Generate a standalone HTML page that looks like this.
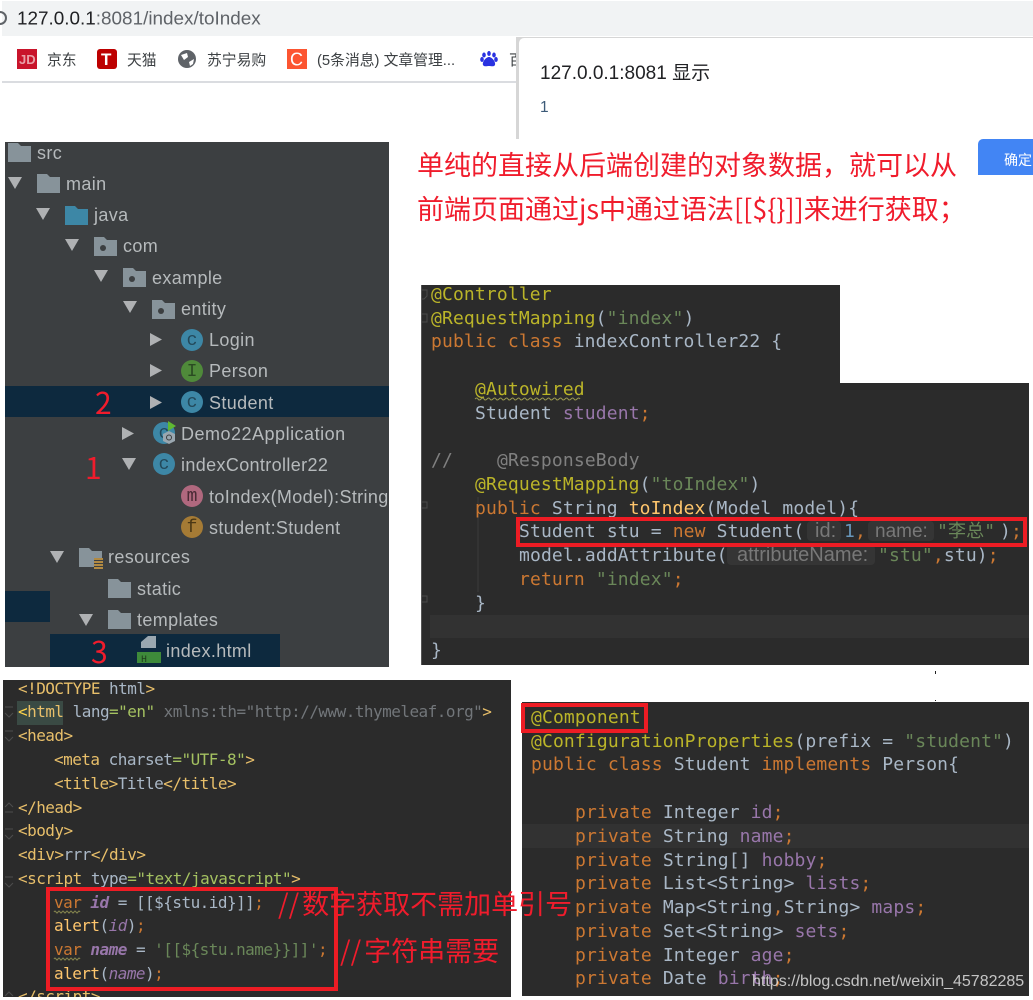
<!DOCTYPE html>
<html lang="zh"><head><meta charset="utf-8"><title>toIndex</title>
<style>
html,body{margin:0;padding:0;background:#fff;width:1033px;height:1000px;overflow:hidden}
svg{display:block}
text{white-space:pre}
.s{font-family:"Liberation Sans","Noto Sans CJK SC",sans-serif}
.t{font-family:"Liberation Sans",sans-serif;font-size:18px;fill:#b6babc;letter-spacing:.36px}
.b{font-family:"Liberation Sans","Noto Sans CJK SC",sans-serif;font-size:14.8px;fill:#3c4043}
.r{font-family:"Noto Sans CJK SC",sans-serif;font-size:27px;fill:#f01c2c}
.c{font-family:"DejaVu Sans Mono","Noto Sans CJK SC",monospace;font-size:18px;letter-spacing:.14px;fill:#a9b7c6}
.h{font-family:"DejaVu Sans Mono",monospace;font-size:16px;letter-spacing:-.53px;fill:#a9b7c6}
.a{fill:#bbb529}.g{fill:#6a8759}.k{fill:#cc7832}.p{fill:#9876aa}.m{fill:#ffc66d}.y{fill:#808080}.e{fill:#e8bf6a}.n{fill:#6897bb}.v{fill:#a5c261}
.i{font-style:italic;fill:#9876aa}
.hint{font-family:"Liberation Sans",sans-serif;font-size:19px;fill:#787878}
.ic{font-family:"Liberation Mono",monospace;font-size:18px;text-anchor:middle}
</style></head><body>
<svg width="1033" height="1000" viewBox="0 0 1033 1000" xmlns="http://www.w3.org/2000/svg">
<defs>
<path id="f" d="M0 0h10l3 3h10v16H0z" fill="#87939a"/>
<g id="pk"><path d="M0 0h10l3 3h10v16H0z" fill="#87939a"/><circle cx="9" cy="11" r="3" fill="#3c3f41"/></g>
<path id="ad" d="M0 0h14l-7 12z" fill="#afb1b3"/>
<path id="ar" d="M0 0l12 6.500-12 6.500z" fill="#afb1b3"/>
<clipPath id="cl"><rect x="3" y="680" width="508" height="317"/></clipPath>
</defs>

<!-- browser chrome -->
<rect x="2" y="1" width="1031" height="35" fill="#f1f3f4"/>
<path d="M0 12a6 6 0 0 1 0 12" fill="none" stroke="#5f6368" stroke-width="2"/>
<text class="s" x="17" y="24.500" font-size="18.900" fill="#5f6368"><tspan fill="#202124">127.0.0.1</tspan>:8081/index/toIndex</text>
<rect x="17" y="49" width="20" height="20" fill="#c9142b"/>
<text class="s" x="19" y="64" font-size="13" font-weight="bold" fill="#e9a0a8">JD</text>
<text class="b" x="47" y="65">京东</text>
<rect x="97" y="49" width="20" height="20" rx="3" fill="#bd0000"/>
<text class="s" x="101" y="65" font-size="17" font-weight="bold" fill="#fff">T</text>
<text class="b" x="127" y="65">天猫</text>
<circle cx="187" cy="59" r="9" fill="#5f6368"/>
<path d="M181 55l6-2 1 4-4 3zM189 62l5-3-1 5-3 2z" fill="#fff"/>
<text class="b" x="207" y="65">苏宁易购</text>
<rect x="287" y="49" width="20" height="20" fill="#fc5531"/>
<text class="s" x="290" y="65.500" font-size="18" fill="#fff">C</text>
<text class="b" x="317" y="65">(5条消息) 文章管理...</text>
<g fill="#2932e1"><ellipse cx="484" cy="55" rx="1.800" ry="2.500"/><ellipse cx="489" cy="53.500" rx="1.800" ry="2.500"/><ellipse cx="494" cy="55" rx="1.800" ry="2.500"/><ellipse cx="482" cy="59.500" rx="1.800" ry="2.500"/><ellipse cx="496" cy="59.500" rx="1.800" ry="2.500"/><path d="M489 57c3 0 7 5 6 8-1 2-4 1-6 1s-5 1-6-1c-1-3 3-8 6-8z"/></g>
<text class="b" x="509" y="65">百</text>
<rect x="2" y="81" width="517" height="2" fill="#dadce0"/>

<!-- alert dialog -->
<rect x="516" y="37" width="517" height="102" fill="#d6d6d6"/>
<path d="M519 139V43a5 5 0 0 1 5-5H1033V139z" fill="#fff"/>
<text class="s" x="540" y="79" font-size="19" fill="#202124">127.0.0.1:8081 显示</text>
<text class="s" x="540" y="112" font-size="15.500" fill="#3c5a78">1</text>
<path d="M978 175V144a5 5 0 0 1 5-5H1033V175z" fill="#4285f4"/>
<text class="s" x="1004" y="165" font-size="14" fill="#fff">确定</text>

<!-- red heading -->
<text class="r" x="417" y="175">单纯的直接从后端创建的对象数据&#xFF0C;就可以从</text>
<text class="r" x="417" y="219">前端页面通过js中通过语法[[${}]]来进行获取&#xFF1B;</text>

<!-- project tree -->
<rect x="5" y="142" width="384" height="525" fill="#3c3f41"/>
<rect x="5" y="386" width="384" height="31" fill="#0d293e"/>
<rect x="5" y="591" width="45" height="31" fill="#0d293e"/>
<rect x="50" y="634" width="230" height="33" fill="#0d293e"/>

<use href="#f" x="8" y="143"/><text class="t" x="37" y="159">src</text>
<use href="#ad" x="8" y="177"/><use href="#f" x="37" y="174"/><text class="t" x="66" y="190">main</text>
<use href="#ad" x="36" y="208"/><path d="M65 206h10l3 3h10v16H65z" fill="#3d87a6"/><text class="t" x="94" y="221">java</text>
<use href="#ad" x="65" y="239"/><use href="#pk" x="94" y="237"/><text class="t" x="123" y="252">com</text>
<use href="#ad" x="94" y="270"/><use href="#pk" x="123" y="268"/><text class="t" x="152" y="284">example</text>
<use href="#ad" x="123" y="301"/><use href="#pk" x="152" y="300"/><text class="t" x="181" y="315">entity</text>

<use href="#ar" x="150" y="333"/><circle cx="192" cy="340" r="11" fill="#3d87a6"/><text class="ic" x="192" y="345" fill="#23495a">c</text><text class="t" x="209" y="346">Login</text>
<use href="#ar" x="150" y="364"/><circle cx="192" cy="371" r="11" fill="#4f8a3a"/><text class="ic" x="192" y="376" fill="#2a4a22" font-size="15">I</text><text class="t" x="209" y="377">Person</text>
<use href="#ar" x="150" y="396"/><circle cx="192" cy="402" r="11" fill="#3d87a6"/><text class="ic" x="192" y="407" fill="#23495a">c</text><text class="t" x="209" y="409">Student</text>
<use href="#ar" x="122" y="427"/><circle cx="164" cy="433" r="11" fill="#3d87a6"/><text class="ic" x="164" y="438" fill="#23495a">c</text><path d="M168 421l8 5-8 5z" fill="#5fb832"/><path d="M169 431l6 3v7l-6 3-6-3v-7z" fill="#9aa7b0"/><circle cx="169" cy="437.500" r="2.500" fill="none" stroke="#3c3f41"/><text class="t" x="181" y="440" style="letter-spacing:.5px">Demo22Application</text>
<use href="#ad" x="122" y="458"/><circle cx="164" cy="464" r="11" fill="#3d87a6"/><text class="ic" x="164" y="469" fill="#23495a">c</text><text class="t" x="181" y="471">indexController22</text>
<circle cx="192" cy="496" r="11" fill="#b0687e"/><text class="ic" x="192" y="501" fill="#4a2a35">m</text><text class="t" x="209" y="503">toIndex(Model):String</text>
<circle cx="192" cy="527" r="11" fill="#a57b35"/><text class="ic" x="192" y="532" fill="#4a3715">f</text><text class="t" x="209" y="534">student:Student</text>
<use href="#ad" x="50" y="551"/><use href="#f" x="79" y="548"/><rect x="94" y="558" width="10" height="12" fill="#3c3f41"/><path d="M94 559h9M94 562h9M94 565h9M94 568h9" stroke="#d9a343" stroke-width="1.500"/><text class="t" x="108" y="563">resources</text>
<use href="#f" x="108" y="579"/><text class="t" x="137" y="595">static</text>
<use href="#ad" x="79" y="614"/><use href="#f" x="108" y="610"/><text class="t" x="137" y="626">templates</text>
<path d="M141 648v-6l7-6h8v12z" fill="#9aa7b0"/><rect x="137" y="652" width="24" height="11" fill="#3e8a3a"/><text class="ic" x="144" y="662" style="font-size:10px" fill="#1f3a1c">H</text><text class="t" x="166" y="657">index.html</text>

<g font-family="'Noto Sans CJK SC',sans-serif" font-size="30" fill="#f01c2c">
<text x="95" y="414">2</text><text x="85" y="479">1</text><text x="91" y="663">3</text>
</g>

<!-- controller code -->
<path d="M421 285H840V383H1029V665H421z" fill="#2b2b2b"/>
<rect x="421" y="285" width="1" height="380" fill="#555"/>
<rect x="430" y="615" width="599" height="23" fill="#323232"/>
<path d="M478 497V592" stroke="#3b3b3b"/>
<g fill="none" stroke="#4a4a4a"><path d="M422 290h5v6l-3 3h-2M422 314h5v8h-5M422 502h5v6h-5M422 596h5v6h-5"/></g>
<text class="c a" x="431" y="300">@Controller</text>
<text class="c" x="431" y="324"><tspan class="a">@RequestMapping</tspan>(<tspan class="g">"index"</tspan>)</text>
<text class="c" x="431" y="347"><tspan class="k">public class </tspan>indexController22 {</text>
<text class="c a" x="475" y="395">@Autowired</text>
<path d="M475 399q2-2 3 0t3 0 3 0 3 0 3 0 3 0 3 0 3 0 3 0 3 0 3 0 3 0 3 0 3 0 3 0 3 0 3 0 3 0 3 0 3 0 3 0 3 0 3 0 3 0 3 0 3 0 3 0 3 0 3 0 3 0 3 0 3 0 3 0 3 0 3 0" fill="none" stroke="#9a9a50"/>
<text class="c" x="475" y="419">Student <tspan class="p">student</tspan><tspan class="k">;</tspan></text>
<text class="c y" x="431" y="466">//  <tspan x="497">@ResponseBody</tspan></text>
<text class="c" x="475" y="490"><tspan class="a">@RequestMapping</tspan>(<tspan class="g">"toIndex"</tspan>)</text>
<text class="c" x="475" y="514"><tspan class="k">public </tspan>String <tspan class="m">toIndex</tspan>(Model model){</text>
<rect x="807" y="521" width="34" height="20" rx="4" fill="#353535"/>
<rect x="868" y="521" width="66" height="20" rx="4" fill="#353535"/>
<text class="c" x="519" y="537">Student stu = <tspan class="k">new </tspan>Student(</text>
<text class="hint" x="815" y="537" style="font-size:20px">id:</text>
<text class="c n" x="844" y="537">1<tspan class="k">,</tspan></text>
<text class="hint" x="875" y="537">name:</text>
<text class="c g" x="937" y="537">"李总"</text>
<text class="c" x="1000" y="537">)<tspan class="k">;</tspan></text>
<rect x="727" y="545" width="148" height="20" rx="4" fill="#353535"/>
<text class="c" x="519" y="561">model.addAttribute(</text>
<text class="hint" x="737" y="561" style="font-size:20px">attributeName:</text>
<text class="c" x="878" y="561"><tspan class="g">"stu"</tspan><tspan class="k">,</tspan>stu)<tspan class="k">;</tspan></text>
<text class="c" x="519" y="585"><tspan class="k">return </tspan><tspan class="g">"index"</tspan><tspan class="k">;</tspan></text>
<text class="c" x="475" y="609">}</text>
<text class="c" x="431" y="656">}</text>
<rect x="518" y="519" width="507" height="26" fill="none" stroke="#ed1c24" stroke-width="4"/>
<rect x="935" y="671" width="1" height="3" fill="#222"/><rect x="935" y="700" width="1" height="1" fill="#222"/>

<!-- html code -->
<rect x="3" y="680" width="508" height="317" fill="#2b2b2b"/>
<rect x="17" y="701" width="46" height="24" fill="#3a4a44"/>
<g clip-path="url(#cl)">
<g fill="none" stroke="#4d4d4d"><path d="M5 707h8M5 713l4 4 4-4M5 731h8M5 737l4 4 4-4M5 807l4-4 4 4M5 812h8M5 829h8M5 835l4 4 4-4M5 877h8M5 883l4 4 4-4M5 996l4-4 4 4"/></g>
<text class="h" x="18" y="694"><tspan class="e">&lt;!DOCTYPE </tspan>html<tspan class="e">&gt;</tspan></text>
<text class="h" x="18" y="717"><tspan fill="#ffd54a">&lt;</tspan><tspan class="e">html</tspan> lang<tspan class="v">="en"</tspan> <tspan fill="#72767a">xmlns:th="http://www.thymeleaf.org"</tspan><tspan class="e">&gt;</tspan></text>
<text class="h e" x="18" y="741">&lt;head&gt;</text>
<text class="h" x="54" y="765"><tspan class="e">&lt;meta </tspan>charset<tspan class="v">="UTF-8"</tspan><tspan class="e">&gt;</tspan></text>
<text class="h" x="54" y="789"><tspan class="e">&lt;title&gt;</tspan>Title<tspan class="e">&lt;/title&gt;</tspan></text>
<text class="h e" x="18" y="813">&lt;/head&gt;</text>
<text class="h e" x="18" y="836">&lt;body&gt;</text>
<text class="h" x="18" y="860"><tspan class="e">&lt;div&gt;</tspan>rrr<tspan class="e">&lt;/div&gt;</tspan></text>
<text class="h" x="18" y="884"><tspan class="e">&lt;script </tspan>type<tspan class="v">="text/javascript"</tspan><tspan class="e">&gt;</tspan></text>
<text class="h" x="54" y="908"><tspan class="k">var </tspan><tspan class="i" font-weight="bold">id</tspan> = [[${stu.id}]]<tspan class="k">;</tspan></text>
<text class="h" x="54" y="931"><tspan class="m">alert</tspan>(<tspan class="i">id</tspan>)<tspan class="k">;</tspan></text>
<text class="h" x="54" y="955"><tspan class="k">var </tspan><tspan class="i" font-weight="bold">name</tspan> = <tspan class="g">'[[${stu.name}}]]'</tspan><tspan class="k">;</tspan></text>
<text class="h" x="54" y="979"><tspan class="m">alert</tspan>(<tspan class="i">name</tspan>)<tspan class="k">;</tspan></text>
<text class="h e" x="18" y="1002">&lt;/script&gt;</text>
<path d="M54 912q1-2 2 0t2 0 2 0 2 0 2 0 2 0 2 0 2 0 2 0 2 0 2 0 2 0 2 0M54 959q1-2 2 0t2 0 2 0 2 0 2 0 2 0 2 0 2 0 2 0 2 0 2 0 2 0 2 0" fill="none" stroke="#8a8a50"/>
</g>
<rect x="48" y="889" width="288" height="100" fill="none" stroke="#ed1c24" stroke-width="4"/>

<!-- student code -->
<rect x="522" y="702" width="507" height="294" fill="#2b2b2b"/>
<rect x="522" y="824" width="507" height="24" fill="#323232"/>
<text class="c a" x="531" y="723">@Component</text>
<text class="c" x="531" y="747"><tspan class="a">@ConfigurationProperties</tspan>(prefix = <tspan class="g">"student"</tspan>)</text>
<text class="c" x="531" y="770"><tspan class="k">public class </tspan>Student <tspan class="k">implements </tspan>Person{</text>
<text class="c" x="575" y="818"><tspan class="k">private </tspan>Integer <tspan class="p">id</tspan><tspan class="k">;</tspan></text>
<text class="c" x="575" y="842"><tspan class="k">private </tspan>String <tspan class="p">name</tspan><tspan class="k">;</tspan></text>
<text class="c" x="575" y="866"><tspan class="k">private </tspan>String[] <tspan class="p">hobby</tspan><tspan class="k">;</tspan></text>
<text class="c" x="575" y="889"><tspan class="k">private </tspan>List&lt;String&gt; <tspan class="p">lists</tspan><tspan class="k">;</tspan></text>
<text class="c" x="575" y="913"><tspan class="k">private </tspan>Map&lt;String<tspan class="k">,</tspan>String&gt; <tspan class="p">maps</tspan><tspan class="k">;</tspan></text>
<text class="c" x="575" y="937"><tspan class="k">private </tspan>Set&lt;String&gt; <tspan class="p">sets</tspan><tspan class="k">;</tspan></text>
<text class="c" x="575" y="961"><tspan class="k">private </tspan>Integer <tspan class="p">age</tspan><tspan class="k">;</tspan></text>
<text class="c" x="575" y="984"><tspan class="k">private </tspan>Date <tspan class="p">birth</tspan><tspan class="k">;</tspan></text>
<rect x="523" y="705" width="123" height="26" fill="none" stroke="#ed1c24" stroke-width="4"/>

<!-- annotations -->
<text class="r" x="278" y="914">//<tspan dx="3">数字获取不需加单引号</tspan></text>
<text class="r" x="340" y="961">//<tspan dx="3">字符串需要</tspan></text>
<text class="s" x="752" y="986" font-size="16" fill="#fff" fill-opacity=".72">https://blog.csdn.net/weixin_45782285</text>
</svg>
</body></html>
